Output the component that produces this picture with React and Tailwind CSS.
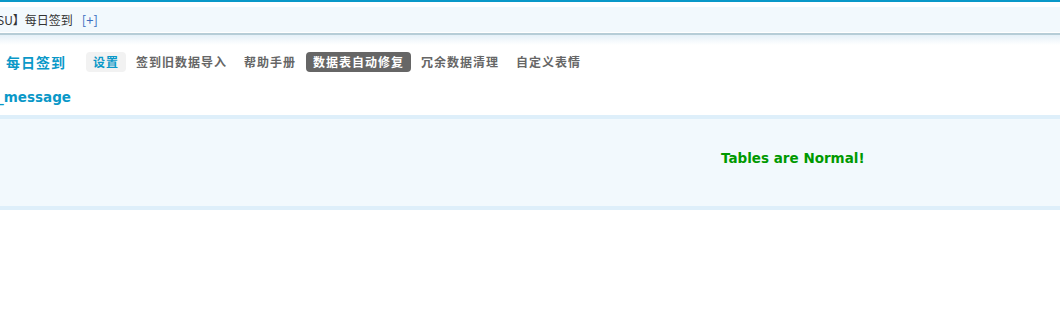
import React from "react";

const tabs = [
  { label: "设置", kind: "current" },
  { label: "签到旧数据导入" },
  { label: "帮助手册" },
  { label: "数据表自动修复", kind: "active" },
  { label: "冗余数据清理" },
  { label: "自定义表情" },
];

export default function App() {
  return (
    <div
      className="w-[1060px] h-[329px] bg-white overflow-hidden"
      style={{ fontFamily: '"DejaVu Sans", "Noto Sans CJK SC", sans-serif' }}
    >
      <div className="h-[2px] bg-[#0A98C8]" />
      <div className="h-[5px] bg-white" />
      <div className="h-[25px] bg-[#F2F9FD] flex items-center text-[12px] text-[#333] whitespace-nowrap"
        style={{ fontFamily: '"Noto Sans CJK SC", "DejaVu Sans", sans-serif' }}>
        <span className="-ml-[3px]">SU】每日签到</span>
        <span className="ml-[9px] text-[13px] text-[#3D6FC0]">[+]</span>
      </div>
      <div className="h-[1px] bg-white" />
      <div className="h-[2px] bg-[#B6CDD7]" />
      <div className="h-[10px] bg-gradient-to-b from-[#E5F0F8] to-white" />

      <div className="mt-[7px] h-[20px] flex items-center whitespace-nowrap"
        style={{ fontFamily: '"Noto Sans CJK SC", "DejaVu Sans", sans-serif' }}>
        <h3 className="ml-[6px] text-[14px] tracking-[1px] font-bold text-[#0A98C8] leading-[20px]">每日签到</h3>
        <ul className="ml-[20px] flex items-center gap-[3px]">
          {tabs.map((t) => (
            <li
              key={t.label}
              className={
                "h-[20px] px-[7px] rounded-[4px] text-[12px] tracking-[1px] font-bold leading-[20px] " +
                (t.kind === "current"
                  ? "bg-[#F2F2F2] text-[#0A98C8]"
                  : t.kind === "active"
                  ? "bg-[#666666] text-white"
                  : "text-[#666666]")
              }
            >
              {t.label}
            </li>
          ))}
        </ul>
      </div>

      <div className="mt-[14px] h-[22px] leading-[22px] text-[13.5px] font-bold text-[#0A98C8] -ml-[3px] whitespace-nowrap">
        _message
      </div>

      <div className="mt-[7px] border-t-4 border-b-4 border-[#DEEFFA] bg-[#F2F9FD] h-[95px]">
        <div className="pt-[29px] pl-[721px] text-[13.5px] leading-[20px] font-bold text-[#009900] whitespace-nowrap">
          Tables are Normal!
        </div>
      </div>
    </div>
  );
}
